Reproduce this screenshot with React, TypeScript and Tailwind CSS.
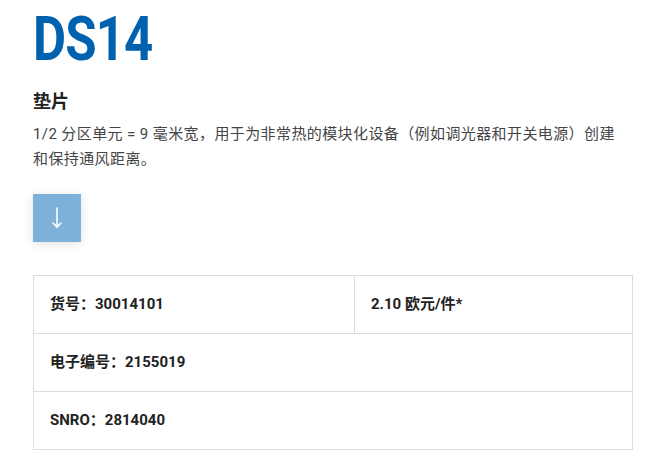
const cjk = "font-['Roboto','Noto_Sans_CJK_SC',sans-serif]";

type Cell = { label: string; value: string };

const rows: Cell[][] = [
  [
    { label: "货号：", value: "30014101" },
    { label: "", value: "2.10 欧元/件*" },
  ],
  [{ label: "电子编号：", value: "2155019" }],
  [{ label: "SNRO：", value: "2814040" }],
];

const ArrowDown = () => (
  <svg width="14" height="24" viewBox="0 0 14 24" fill="none" stroke="white" strokeWidth="1.6" strokeLinecap="round">
    <path d="M7 2v19" />
    <path d="M3 17l4 4 4-4" />
  </svg>
);

export default function App() {
  return (
    <div className={`min-h-screen bg-white px-[33px] text-[#333] ${cjk}`}>
      <h1 className="pt-[8px] h-[80px] text-[62px] leading-[62px] font-bold text-[#0062ae] tracking-[-1px] origin-left scale-x-[0.82]">
        DS14
      </h1>
      <h2 className="mt-[8px] text-[18px] leading-[28px] font-bold text-[#222]">垫片</h2>
      <p className="mt-[6px] max-w-[600px] text-[15px] leading-[25px] tracking-[0.4px] text-[#444]">
        1/2 分区单元 = 9 毫米宽，用于为非常热的模块化设备（例如调光器和开关电源）创建和保持通风距离。
      </p>
      <button className="mt-[22px] w-[48px] h-[48px] bg-[#7eb1da] flex items-center justify-center shadow-[0_2px_10px_rgba(0,0,0,0.12)]">
        <ArrowDown />
      </button>
      <table className="mt-[33px] w-[600px] border-collapse text-[15px] font-bold text-[#222]">
        <tbody>
          {rows.map((row, i) => (
            <tr key={i} className="h-[58px]">
              {row.map((c, j) => (
                <td
                  key={j}
                  colSpan={row.length === 1 ? 2 : 1}
                  className={`border border-[#dcdcdc] px-[16px] ${j === 0 && row.length > 1 ? "w-[321px]" : ""}`}
                >
                  {c.label}
                  {c.value}
                </td>
              ))}
            </tr>
          ))}
        </tbody>
      </table>
    </div>
  );
}
